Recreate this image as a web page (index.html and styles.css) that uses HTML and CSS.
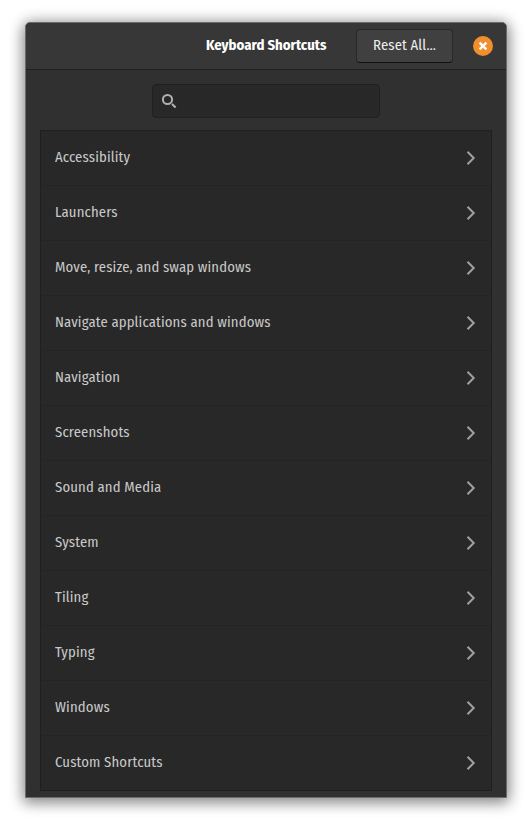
FILE: index.html
```html
<!DOCTYPE html>
<html lang="en">
<head>
<meta charset="utf-8">
<title>Keyboard Shortcuts</title>
<link rel="stylesheet" href="styles.css">
</head>
<body>
<svg class="defs" width="0" height="0"><symbol id="chevron" viewBox="0 0 16 16"><path d="M4.5 1.8 10.7 8l-6.2 6.2" fill="none" stroke="currentColor" stroke-width="2"/></symbol></svg>
<main class="window">
  <header class="titlebar">
    <h1 class="title">Keyboard Shortcuts</h1>
    <button class="reset">Reset All…</button>
    <button class="close" aria-label="Close"><svg width="20" height="20" viewBox="0 0 20 20"><circle cx="10" cy="10" r="10" fill="#f28e2c"/><path d="m6.6 6.6 6.8 6.8m0-6.8-6.8 6.8" stroke="#fff" stroke-width="2.4"/></svg></button>
  </header>
  <div class="search"><svg width="16" height="16" viewBox="0 0 16 16" fill="none" stroke="#b0b0b0"><circle cx="6.5" cy="6.5" r="4.6" stroke-width="2"/><path d="m11 11 3.6 3.6" stroke-width="2.1"/></svg></div>
  <ul class="list">
    <li class="row">Accessibility<svg class="arrow"><use href="#chevron"/></svg></li>
    <li class="row">Launchers<svg class="arrow"><use href="#chevron"/></svg></li>
    <li class="row">Move, resize, and swap windows<svg class="arrow"><use href="#chevron"/></svg></li>
    <li class="row">Navigate applications and windows<svg class="arrow"><use href="#chevron"/></svg></li>
    <li class="row">Navigation<svg class="arrow"><use href="#chevron"/></svg></li>
    <li class="row">Screenshots<svg class="arrow"><use href="#chevron"/></svg></li>
    <li class="row">Sound and Media<svg class="arrow"><use href="#chevron"/></svg></li>
    <li class="row">System<svg class="arrow"><use href="#chevron"/></svg></li>
    <li class="row">Tiling<svg class="arrow"><use href="#chevron"/></svg></li>
    <li class="row">Typing<svg class="arrow"><use href="#chevron"/></svg></li>
    <li class="row">Windows<svg class="arrow"><use href="#chevron"/></svg></li>
    <li class="row">Custom Shortcuts<svg class="arrow"><use href="#chevron"/></svg></li>
  </ul>
</main>
</body>
</html>
```

FILE: styles.css
```css
* { box-sizing: border-box; }
body {
  margin: 0;
  padding: 22px 25px 28px;
  height: 826px;
  overflow: hidden;
  background: #fff;
  font: 14.67px/20px "Fira Sans Condensed", "Noto Sans", sans-serif;
}
.defs { display: block; }
.window {
  width: 482px;
  height: 776px;
  border: 1px solid #6b6b6b;
  border-radius: 5px 5px 0 0;
  background: #303030;
  box-shadow: 0 3px 14px 2px rgba(0, 0, 0, .42), 0 0 18px rgba(0, 0, 0, .12);
}
.titlebar {
  display: flex;
  align-items: center;
  justify-content: flex-end;
  height: 47px;
  padding-right: 13px;
  border-bottom: 1px solid #202020;
  border-radius: 4px 4px 0 0;
  background: #373737;
}
.title {
  width: 121px;
  margin: 0 29px 2px 0;
  font-size: 14.67px;
  line-height: 20px;
  font-weight: 700;
  color: #fff;
  white-space: nowrap;
}
.reset {
  width: 97px;
  height: 34px;
  padding: 0 0 2px 16px;
  border: 1px solid #282828;
  border-bottom-color: #101010;
  border-radius: 4px;
  background: #404040;
  color: #eee;
  font: inherit;
  letter-spacing: .13px;
  text-align: left;
  margin-right: 20px;
}
.close {
  width: 20px;
  height: 20px;
  padding: 0;
  border: 0;
  background: none;
}
.close svg { display: block; }
.search {
  display: flex;
  align-items: center;
  width: 228px;
  height: 34px;
  margin: 14px auto 12px;
  padding-left: 8px;
  border: 1px solid #202020;
  border-radius: 4px;
  background: #282828;
}
.list {
  margin: 0 14px;
  padding: 0;
  list-style: none;
  border: 1px solid #1f1f1f;
  background: #282828;
}
.row {
  display: flex;
  align-items: center;
  justify-content: space-between;
  height: 55px;
  padding: 0 12px 3px 14px;
  border-bottom: 1px solid #242424;
  color: #c9c9c9;
  letter-spacing: .14px;
}
.row:last-child { height: 54px; padding-bottom: 2px; border-bottom: 0; }
.arrow { width: 16px; height: 16px; margin-top: 2px; color: #a0a0a0; }
```
